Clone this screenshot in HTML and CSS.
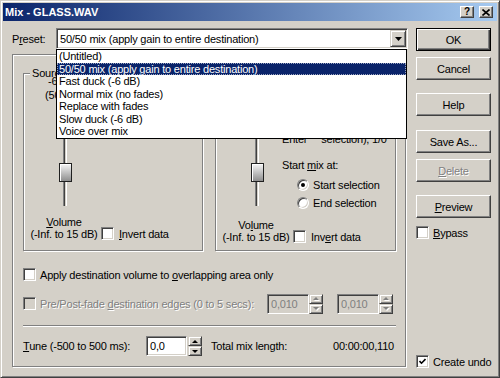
FILE: index.html
```html
<!DOCTYPE html>
<html lang="en">
<head>
  <meta charset="UTF-8" />
  <title>Mix - GLASS.WAV</title>
  <link rel="stylesheet" href="styles.css">
</head>
<body>

<div class="window">
  <div class="titlebar">
    <span class="title">Mix - GLASS.WAV</span>
    <div class="title-btns">
      <span class="tbtn help-q">?</span>
      <span class="tbtn">
        <svg width="8" height="7" viewBox="0 0 8 7"><path d="M0.5 0.5 L7.5 6.5 M7.5 0.5 L0.5 6.5" stroke="#000" stroke-width="1.6" fill="none"/></svg>
      </span>
    </div>
  </div>

  <div class="dialog">
    <div class="main">
      <div class="preset-row">
        <span class="preset-label">P<u>r</u>eset:</span>
        <div class="combo">
          <span class="combo-value">50/50 mix (apply gain to entire destination)</span>
          <span class="combo-arrow">
            <svg width="7" height="4" viewBox="0 0 7 4"><polygon points="0,0 7,0 3.5,4" fill="#000"/></svg>
          </span>
          <ul class="droplist">
            <li>(Untitled)</li>
            <li class="sel">50/50 mix (apply gain to entire destination)</li>
            <li>Fast duck (-6 dB)</li>
            <li>Normal mix (no fades)</li>
            <li>Replace with fades</li>
            <li>Slow duck (-6 dB)</li>
            <li>Voice over mix</li>
          </ul>
        </div>
      </div>

      <div class="frame">
        <div class="groups">
          <div class="group">
            <span class="group-title">Source</span>
            <div class="top-area">
              <div class="slider-col">
                <span class="level">-6,0 dB</span>
                <span class="level pct">(50,0 %)</span>
                <div class="slider"><div class="thumb"></div></div>
              </div>
            </div>
            <div class="bottom-row">
              <div class="vol-col"><u>V</u>olume<br>(-Inf. to 15 dB)</div>
              <label class="check-label invert"><span class="checkbox"></span><span><u>I</u>nvert data</span></label>
            </div>
          </div>

          <div class="group">
            <span class="group-title">Destination</span>
            <div class="top-area">
              <div class="slider-col">
                <span class="level">-6,0 dB</span>
                <span class="level pct">(50,0 %)</span>
                <div class="slider"><div class="thumb"></div></div>
              </div>
              <div class="mix-opts">
                <div class="hidden-line"><span>Enter</span><span class="gap">selection), 1/0</span></div>
                <div class="start-label">Start <u>m</u>ix at:</div>
                <label class="radio-row first"><span class="radio checked"><span class="dot"></span></span>Start selection</label>
                <label class="radio-row"><span class="radio"></span>End selection</label>
              </div>
            </div>
            <div class="bottom-row">
              <div class="vol-col">Vo<u>l</u>ume<br>(-Inf. to 15 dB)</div>
              <label class="check-label invert"><span class="checkbox"></span><span>Inv<u>e</u>rt data</span></label>
            </div>
          </div>
        </div>

        <label class="check-label opt-row1"><span class="checkbox"></span><span>Apply destination volume to <u>o</u>verlapping area only</span></label>

        <div class="opt-row2 disabled">
          <span class="checkbox off"></span>
          <span class="opt-text">Pre/Post-fade <u>d</u>estination edges (0 to 5 secs):</span>
          <div class="spin-field">
            <span class="field off">0,010</span>
            <span class="spin off"><span class="spin-btn"><i class="up"></i></span><span class="spin-btn"><i class="down"></i></span></span>
          </div>
          <div class="spin-field second">
            <span class="field off">0,010</span>
            <span class="spin off"><span class="spin-btn"><i class="up"></i></span><span class="spin-btn"><i class="down"></i></span></span>
          </div>
        </div>

        <div class="sep"></div>

        <div class="tune-row">
          <span class="tune-label"><u>T</u>une (-500 to 500 ms):</span>
          <span class="field tune-field">0,0</span>
          <span class="spin tune-spin"><span class="spin-btn"><i class="up"></i></span><span class="spin-btn"><i class="down"></i></span></span>
          <span class="total-label">Total mix length:</span>
          <span class="total-value">00:00:00,110</span>
        </div>
      </div>
    </div>

    <div class="side">
      <button class="btn default">OK</button>
      <button class="btn cancel">Cancel</button>
      <button class="btn help">Help</button>
      <button class="btn save">Save As...</button>
      <button class="btn delete" disabled><u>D</u>elete</button>
      <button class="btn preview"><u>P</u>review</button>
      <label class="check-label bypass"><span class="checkbox"></span><span><u>B</u>ypass</span></label>
      <label class="check-label undo">
        <span class="checkbox">
          <svg width="7" height="7" viewBox="0 0 7 7"><polyline points="0.5,3 2.5,5.2 6.5,1" stroke="#000" stroke-width="1.6" fill="none"/></svg>
        </span>
        <span>Create undo</span>
      </label>
    </div>
  </div>
</div>

</body>
</html>
```

FILE: styles.css
```css
body {
  margin: 0;
  font-family: "Liberation Sans", Arial, sans-serif;
  font-size: 11px;
  letter-spacing: -0.2px;
  color: #000;
  background: #d4d0c8;
}

u {
  text-decoration-thickness: 1px;
  text-underline-offset: 1px;
}

.window {
  width: 500px;
  height: 378px;
  box-sizing: border-box;
  background: #d4d0c8;
  border: 1px solid;
  border-color: #d4d0c8 #404040 #404040 #d4d0c8;
  box-shadow: inset 1px 1px #fff, inset -1px -1px #808080;
  padding: 2px;
  display: flex;
  flex-direction: column;
}

/* title bar */

.titlebar {
  height: 18px;
  display: flex;
  align-items: center;
  padding: 0 2px 0 2px;
  background: linear-gradient(to right, #0a246a, #a6caf0);
  color: #fff;
  font-weight: bold;
}

.title {
  flex: 1;
  letter-spacing: 0;
}

.title-btns {
  display: flex;
  gap: 5px;
  margin-right: 2px;
}

.tbtn {
  width: 14px;
  height: 12px;
  box-sizing: border-box;
  background: #d4d0c8;
  border: 1px solid;
  border-color: #fff #404040 #404040 #fff;
  box-shadow: inset -1px -1px #808080;
  display: flex;
  align-items: center;
  justify-content: center;
  color: #000;
}

.help-q {
  font-size: 10px;
  line-height: 10px;
  letter-spacing: 0;
}

/* dialog layout */

.dialog {
  flex: 1;
  display: flex;
  gap: 8px;
  padding: 7px 6px 7px 9px;
}

.main {
  width: 396px;
  display: flex;
  flex-direction: column;
}

.preset-row {
  display: flex;
  align-items: center;
  height: 21px;
}

.preset-label {
  width: 44px;
}

.combo {
  position: relative;
  width: 352px;
  height: 21px;
  box-sizing: border-box;
  display: flex;
  align-items: center;
  background: #fff;
  border: 1px solid;
  border-color: #808080 #fff #fff #808080;
  box-shadow: inset 1px 1px #404040, inset -1px -1px #d4d0c8;
}

.combo-value {
  flex: 1;
  padding-left: 3px;
  white-space: nowrap;
}

.combo-arrow {
  width: 16px;
  height: 17px;
  margin-right: 1px;
  box-sizing: border-box;
  background: #d4d0c8;
  border: 1px solid;
  border-color: #d4d0c8 #404040 #404040 #d4d0c8;
  box-shadow: inset 1px 1px #fff, inset -1px -1px #808080;
  display: flex;
  align-items: center;
  justify-content: center;
}

.droplist {
  position: absolute;
  top: 20px;
  left: -1px;
  width: 351px;
  box-sizing: border-box;
  margin: 0;
  padding: 0;
  list-style: none;
  background: #fff;
  border: 1px solid #000;
  z-index: 5;
}

.droplist li {
  height: 12.5px;
  line-height: 12.5px;
  padding-left: 2px;
  white-space: nowrap;
}

.droplist li.sel {
  background: #0a246a;
  color: #fff;
  outline: 1px dotted #9aa4c0;
  outline-offset: -1px;
}

/* frames */

.frame {
  margin-top: 5px;
  width: 394px;
  height: 313px;
  box-sizing: border-box;
  border: 1px solid #808080;
  box-shadow: inset 1px 1px #fff, 1px 1px #fff;
  padding: 18px 9px 0 10px;
  display: flex;
  flex-direction: column;
}

.groups {
  display: grid;
  grid-template-columns: 180px 181px;
  gap: 12px;
}

.group {
  height: 178px;
  box-sizing: border-box;
  border: 1px solid #808080;
  box-shadow: inset 1px 1px #fff, 1px 1px #fff;
}

.group-title {
  display: table;
  height: 13px;
  line-height: 13px;
  margin: -7px 0 -6px 6px;
  padding: 0 2px;
  background: #d4d0c8;
}

.top-area {
  display: flex;
  padding-left: 16px;
}

.slider-col {
  width: 50px;
  display: flex;
  flex-direction: column;
  align-items: center;
  padding-top: 1px;
}

.level {
  line-height: 13px;
  white-space: nowrap;
}

.level.pct {
  margin-top: 1px;
}

.slider {
  width: 50px;
  height: 102px;
  margin-top: 2px;
  display: flex;
  justify-content: center;
  background: linear-gradient(to right, #808080 0 1px, #404040 1px 2px, #d4d0c8 2px 3px, #fff 3px 4px) center / 4px 100% no-repeat;
}

.thumb {
  width: 13px;
  height: 19px;
  margin-top: 59px;
  box-sizing: border-box;
  border: 1px solid #202020;
  box-shadow: inset 1px 1px #fff;
  background: linear-gradient(#f6f6f6, #8e8e8e);
}

.bottom-row {
  display: flex;
  align-items: flex-end;
  padding-left: 5px;
  margin-top: 10px;
}

.vol-col {
  width: 70px;
  text-align: center;
  line-height: 12px;
  white-space: nowrap;
}

.check-label {
  display: flex;
  align-items: center;
  gap: 4px;
  white-space: nowrap;
}

.invert {
  margin-left: 2px;
  gap: 5px;
  height: 13px;
}

.checkbox {
  width: 13px;
  height: 13px;
  box-sizing: border-box;
  flex: none;
  background: #fff;
  border: 1px solid;
  border-color: #808080 #fff #fff #808080;
  box-shadow: inset 1px 1px #404040, inset -1px -1px #d4d0c8;
  display: flex;
  align-items: center;
  justify-content: center;
}

.checkbox.off {
  background: #d4d0c8;
}

.mix-opts {
  padding-top: 59px;
  white-space: nowrap;
}

.hidden-line {
  line-height: 13px;
}

.hidden-line .gap {
  margin-left: 14px;
}

.start-label {
  margin-top: 13px;
  line-height: 13px;
}

.radio-row {
  display: flex;
  align-items: center;
  gap: 4px;
  height: 13px;
  margin-top: 5px;
  padding-left: 15px;
}

.radio-row.first {
  margin-top: 6px;
}

.radio {
  width: 12px;
  height: 12px;
  box-sizing: border-box;
  border-radius: 50%;
  background: #fff;
  border: 1px solid;
  border-color: #808080 #fff #fff #808080;
  box-shadow: inset 1px 1px #404040, inset -1px -1px #d4d0c8;
  display: flex;
  align-items: center;
  justify-content: center;
}

.radio .dot {
  width: 4px;
  height: 4px;
  border-radius: 50%;
  background: #000;
}

/* options below the groups */

.opt-row1 {
  margin-top: 17px;
  height: 13px;
}

.opt-row2 {
  margin-top: 12px;
  height: 21px;
  display: flex;
  align-items: center;
  white-space: nowrap;
}

.disabled .opt-text {
  margin-left: 4px;
  flex: 1;
  color: #808080;
  text-shadow: 1px 1px 0 #fff;
}

.spin-field {
  display: flex;
  height: 20px;
}

.spin-field.second {
  margin-left: 14px;
  margin-right: 3px;
}

.field {
  width: 42px;
  height: 20px;
  box-sizing: border-box;
  padding-left: 3px;
  line-height: 18px;
  background: #fff;
  border: 1px solid;
  border-color: #808080 #fff #fff #808080;
  box-shadow: inset 1px 1px #404040, inset -1px -1px #d4d0c8;
}

.field.off {
  background: #d4d0c8;
  color: #808080;
}

.spin {
  width: 14px;
  height: 20px;
  display: flex;
  flex-direction: column;
}

.spin-btn {
  flex: 1;
  box-sizing: border-box;
  background: #d4d0c8;
  border: 1px solid;
  border-color: #d4d0c8 #404040 #404040 #d4d0c8;
  box-shadow: inset 1px 1px #fff, inset -1px -1px #808080;
  display: flex;
  align-items: center;
  justify-content: center;
}

.spin-btn i {
  width: 0;
  height: 0;
  border-left: 3px solid transparent;
  border-right: 3px solid transparent;
}

.spin-btn .up {
  border-bottom: 3px solid #000;
}

.spin-btn .down {
  border-top: 3px solid #000;
}

.spin.off .spin-btn .up {
  border-bottom-color: #808080;
  filter: drop-shadow(1px 1px 0 #fff);
}

.spin.off .spin-btn .down {
  border-top-color: #808080;
  filter: drop-shadow(1px 1px 0 #fff);
}

.sep {
  margin-top: 11px;
  border-top: 1px solid #808080;
  border-bottom: 1px solid #fff;
}

.tune-row {
  margin-top: 9px;
  height: 20px;
  display: flex;
  align-items: center;
  white-space: nowrap;
}

.tune-label {
  width: 123px;
}

.tune-field {
  width: 41px;
}

.tune-spin {
  margin-left: 1px;
}

.total-label {
  margin-left: 9px;
}

.total-value {
  margin-left: auto;
  margin-right: 2px;
}

/* buttons column */

.side {
  width: 75px;
  display: flex;
  flex-direction: column;
}

.btn {
  height: 23px;
  box-sizing: border-box;
  padding: 0;
  font: inherit;
  letter-spacing: inherit;
  color: #000;
  background: #d4d0c8;
  border: 1px solid;
  border-color: #fff #404040 #404040 #fff;
  box-shadow: inset -1px -1px #808080;
  display: flex;
  align-items: center;
  justify-content: center;
}

.btn.default {
  border-color: #000;
  box-shadow: inset 1px 1px #fff, inset -1px -1px #404040, inset -2px -2px #808080;
}

.btn.cancel {
  margin-top: 6px;
}

.btn.help {
  margin-top: 13px;
}

.btn.save {
  margin-top: 14px;
}

.btn.delete {
  margin-top: 6px;
  color: #808080;
  text-shadow: 1px 1px 0 #fff;
}

.btn.preview {
  margin-top: 13px;
}

.bypass {
  margin-top: 8px;
  height: 13px;
}

.undo {
  margin-top: auto;
  height: 13px;
}
```
